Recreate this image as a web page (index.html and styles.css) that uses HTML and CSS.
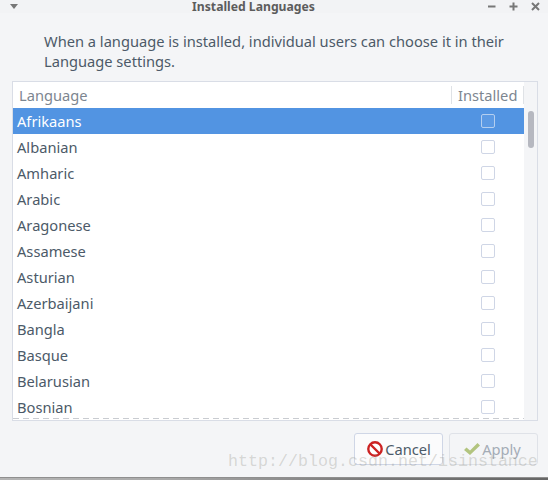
FILE: index.html
```html
<!DOCTYPE html>
<html lang="en">
<head>
  <meta charset="UTF-8">
  <title>Installed Languages</title>
  <link rel="stylesheet" href="styles.css">
</head>
<body>
  <div class="window">
    <div class="titlebar">
      <svg class="menu-arrow" width="8" height="5" viewBox="0 0 8 5"><path d="M0 0h8L4 5z" fill="#777"/></svg>
      <span class="title">Installed Languages</span>
      <div class="win-buttons">
        <svg width="9" height="9" viewBox="0 0 9 9"><path d="M1 4.5h7.5" stroke="#777" stroke-width="2"/></svg>
        <svg width="9" height="9" viewBox="0 0 9 9"><path d="M0.5 4.5h8M4.5 0.5v8" stroke="#777" stroke-width="2"/></svg>
        <svg width="9" height="9" viewBox="0 0 9 9"><path d="M1 1l7 7M8 1l-7 7" stroke="#777" stroke-width="2"/></svg>
      </div>
    </div>

    <p class="intro">When a language is installed, individual users can choose it in their Language settings.</p>

    <div class="list-frame">
      <div class="list-main">
        <div class="list-header">
          <span class="col-language">Language</span>
          <span class="col-installed">Installed</span>
        </div>
        <div class="rows">
          <div class="row selected"><span>Afrikaans</span><i class="check"></i></div>
          <div class="row"><span>Albanian</span><i class="check"></i></div>
          <div class="row"><span>Amharic</span><i class="check"></i></div>
          <div class="row"><span>Arabic</span><i class="check"></i></div>
          <div class="row"><span>Aragonese</span><i class="check"></i></div>
          <div class="row"><span>Assamese</span><i class="check"></i></div>
          <div class="row"><span>Asturian</span><i class="check"></i></div>
          <div class="row"><span>Azerbaijani</span><i class="check"></i></div>
          <div class="row"><span>Bangla</span><i class="check"></i></div>
          <div class="row"><span>Basque</span><i class="check"></i></div>
          <div class="row"><span>Belarusian</span><i class="check"></i></div>
          <div class="row"><span>Bosnian</span><i class="check"></i></div>
        </div>
        <div class="list-end"></div>
      </div>
      <div class="scroll-track"><div class="scroll-thumb"></div></div>
    </div>

    <div class="actions">
      <button class="btn">
        <svg width="18" height="18" viewBox="0 0 18 18"><circle cx="9" cy="9" r="6.7" fill="#fff" stroke="#cc2222" stroke-width="2.4"/><path d="M4.5 4.5l9 9" stroke="#cc2222" stroke-width="2.4"/></svg>
        Cancel
      </button>
      <button class="btn disabled">
        <svg width="18" height="18" viewBox="0 0 18 18"><path d="M1 10l2.5-2.5L7 10.5 14.5 3 17 5.5 7 15z" fill="#b2c47f"/></svg>
        Apply
      </button>
    </div>
  </div>
  <div class="watermark">http://blog.csdn.net/isinstance</div>
  <div class="bottom-shadow"></div>
</body>
</html>
```

FILE: styles.css
```css
html, body {
  margin: 0;
  height: 480px;
  overflow: hidden;
}
body {
  font-family: "Noto Sans", sans-serif;
  font-size: 14.67px;
  color: #4c5a68;
  background: #f4f5f7;
  position: relative;
}
.window {
  display: flex;
  flex-direction: column;
  height: 477px;
}
.titlebar {
  height: 13px;
  padding-right: 41px;
  display: flex;
  align-items: center;
  justify-content: center;
  position: relative;
  background: #f2f3f5;
}
.title {
  font-size: 12.2px;
  line-height: 13px;
  font-weight: 700;
  color: #5c5c5c;
}
.menu-arrow {
  position: absolute;
  left: 10px;
  top: 4px;
}
.win-buttons {
  position: absolute;
  right: 8px;
  top: 2px;
  display: flex;
  gap: 13px;
}
.win-buttons svg {
  display: block;
}
.intro {
  margin: 18px 36px 0 44px;
  line-height: 20px;
  color: #4c5a68;
}
.list-frame {
  margin: 10px 10px 0 12px;
  height: 338px;
  border: 1px solid #d9dde6;
  display: flex;
  background: #fff;
}
.list-main {
  width: 511px;
  display: flex;
  flex-direction: column;
  background: #fff;
  overflow: hidden;
}
.list-header {
  height: 26px;
  flex: none;
  display: flex;
  align-items: center;
  justify-content: space-between;
  color: #7d8690;
}
.col-language {
  padding-left: 6px;
}
.col-installed {
  width: 73px;
  box-sizing: border-box;
  padding-left: 6px;
  border-left: 1px solid #dfe2e6;
  border-right: 1px solid #dfe2e6;
  line-height: 18px;
}
.rows {
  flex: 1;
  min-height: 0;
  overflow: hidden;
}
.row {
  height: 26px;
  display: flex;
  align-items: center;
  justify-content: space-between;
  padding: 0 29px 0 4px;
}
.row.selected {
  background: #5294e2;
  color: #fff;
}
.check {
  width: 12px;
  height: 12px;
  border: 1px solid #cfd6e6;
  border-radius: 2px;
  background: #fff;
}
.row.selected .check {
  background: #5c9ae4;
  border-color: #b4cff0;
}
.list-end {
  flex: none;
  height: 2px;
  background: repeating-linear-gradient(90deg, #c9ccd1 0 6px, transparent 6px 10px) top / 100% 1px no-repeat;
}
.scroll-track {
  flex: 1;
  background: #f4f5f7;
}
.scroll-thumb {
  width: 6px;
  height: 37px;
  margin: 29px 0 0 4px;
  border-radius: 3px;
  background: #b6b8c0;
}
.actions {
  margin: 12px 10px 0 0;
  display: flex;
  justify-content: flex-end;
  gap: 6px;
}
.btn {
  width: 89px;
  height: 32px;
  padding: 0;
  font: inherit;
  color: #4c5a68;
  background: #fbfbfc;
  border: 1px solid #cfd6e6;
  border-radius: 3px;
  display: flex;
  align-items: center;
  justify-content: center;
  gap: 1px;
}
.btn.disabled {
  padding-right: 3px;
  color: #a4acb6;
  background: #f4f5f7;
  border-color: #dfe2e8;
}
.watermark {
  position: absolute;
  left: 228px;
  top: 452px;
  font-family: "Liberation Mono", monospace;
  font-size: 16.67px;
  color: rgba(140, 140, 130, 0.3);
  white-space: nowrap;
}
.bottom-shadow {
  position: absolute;
  left: 0;
  right: 0;
  bottom: 0;
  height: 2px;
  border-top: 1px solid #8f8f8f;
  background: linear-gradient(90deg, #b4b4b4, #aaa 30%, #777 70%, #666);
}
```
